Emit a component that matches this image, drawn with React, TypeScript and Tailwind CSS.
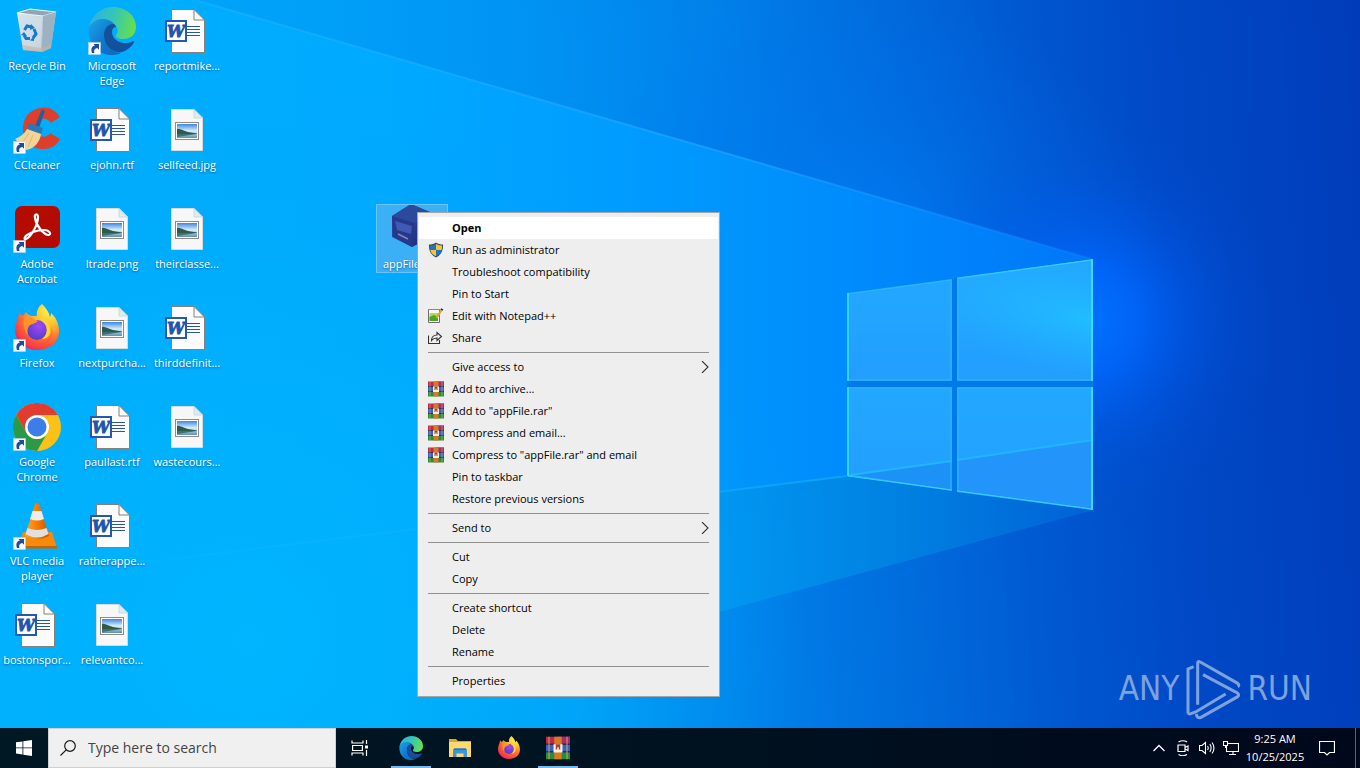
import type { ReactNode } from 'react';

const UI_FONT = 'font-["Open_Sans","Noto_Sans",sans-serif]';

/* ---------- shared gradients ---------- */

function Gradients() {
  return (
    <svg className="absolute h-0 w-0" aria-hidden="true">
      <defs>
        <linearGradient id="edge-blue" x1="0" y1="0.2" x2="0.9" y2="1">
          <stop offset="0" stopColor="#1b9de2" />
          <stop offset="0.5" stopColor="#0f78cf" />
          <stop offset="1" stopColor="#1166bd" />
        </linearGradient>
        <linearGradient id="edge-green" x1="0" y1="0.3" x2="1" y2="0.5">
          <stop offset="0" stopColor="#2bb3e4" />
          <stop offset="0.5" stopColor="#35c5b8" />
          <stop offset="1" stopColor="#66e04c" />
        </linearGradient>
        <radialGradient id="fox-body" cx="0.75" cy="0.15" r="0.95">
          <stop offset="0" stopColor="#fff04a" />
          <stop offset="0.35" stopColor="#ffbd2e" />
          <stop offset="0.65" stopColor="#ff6d30" />
          <stop offset="1" stopColor="#ee2459" />
        </radialGradient>
        <radialGradient id="fox-globe" cx="0.6" cy="0.3" r="0.8">
          <stop offset="0" stopColor="#a447f0" />
          <stop offset="1" stopColor="#4a3cc8" />
        </radialGradient>
        <linearGradient id="bin" x1="0" y1="0" x2="1" y2="1">
          <stop offset="0" stopColor="#dfeaf2" />
          <stop offset="0.6" stopColor="#b9ccd9" />
          <stop offset="1" stopColor="#8fa5b6" />
        </linearGradient>
        <linearGradient id="cone" x1="0" y1="0" x2="1" y2="0">
          <stop offset="0" stopColor="#ffa733" />
          <stop offset="0.5" stopColor="#f57c00" />
          <stop offset="1" stopColor="#cf5500" />
        </linearGradient>
        <linearGradient id="sky" x1="0" y1="0" x2="0" y2="1">
          <stop offset="0" stopColor="#3f86dd" />
          <stop offset="0.5" stopColor="#d8efff" />
          <stop offset="1" stopColor="#5d92a8" />
        </linearGradient>
        <linearGradient id="cube" x1="0" y1="0" x2="1" y2="1">
          <stop offset="0" stopColor="#3558b4" />
          <stop offset="1" stopColor="#1b2672" />
        </linearGradient>
      </defs>
    </svg>
  );
}

/* ---------- wallpaper ---------- */

function Wallpaper() {
  return (
    <svg
      className="absolute inset-0 h-full w-full"
      viewBox="0 0 1360 768"
      preserveAspectRatio="xMidYMid slice"
      aria-hidden="true"
    >
      <defs>
        <linearGradient id="w-base" gradientUnits="userSpaceOnUse" x1="0" y1="80" x2="1360" y2="0">
          <stop offset="0" stopColor="#00aafa" />
          <stop offset="0.25" stopColor="#009ff8" />
          <stop offset="0.4" stopColor="#0092f3" />
          <stop offset="0.53" stopColor="#0080ea" />
          <stop offset="0.65" stopColor="#006bdc" />
          <stop offset="0.75" stopColor="#0058d0" />
          <stop offset="0.85" stopColor="#0049c6" />
          <stop offset="1" stopColor="#003cba" />
        </linearGradient>
        <radialGradient id="w-glow" gradientUnits="userSpaceOnUse" cx="1085" cy="320" r="200">
          <stop offset="0" stopColor="#0072ff" />
          <stop offset="0.25" stopColor="#0068ff" stopOpacity="0.85" />
          <stop offset="0.55" stopColor="#005cf0" stopOpacity="0.4" />
          <stop offset="0.8" stopColor="#0054e0" stopOpacity="0.12" />
          <stop offset="1" stopColor="#0050e0" stopOpacity="0" />
        </radialGradient>
        <radialGradient id="w-halo" gradientUnits="userSpaceOnUse" cx="860" cy="280" r="300">
          <stop offset="0" stopColor="#0084ff" stopOpacity="0.8" />
          <stop offset="0.5" stopColor="#0078f4" stopOpacity="0.35" />
          <stop offset="1" stopColor="#0070f0" stopOpacity="0" />
        </radialGradient>
        <linearGradient id="w-beam" gradientUnits="userSpaceOnUse" x1="0" y1="0" x2="1100" y2="0">
          <stop offset="0" stopColor="#00affe" />
          <stop offset="0.35" stopColor="#00aaff" />
          <stop offset="0.55" stopColor="#009dff" />
          <stop offset="0.7" stopColor="#0092fc" />
          <stop offset="0.8" stopColor="#0089fc" />
          <stop offset="1" stopColor="#0076f8" />
        </linearGradient>
        <linearGradient id="w-beam-low" gradientUnits="userSpaceOnUse" x1="300" y1="0" x2="1092" y2="0">
          <stop offset="0" stopColor="#00b0fc" stopOpacity="0" />
          <stop offset="0.5" stopColor="#0098ee" stopOpacity="0.75" />
          <stop offset="0.75" stopColor="#0082e2" />
          <stop offset="1" stopColor="#0062d6" />
        </linearGradient>
        <radialGradient id="w-left" gradientUnits="userSpaceOnUse" cx="250" cy="640" r="560">
          <stop offset="0" stopColor="#00b8ff" />
          <stop offset="0.6" stopColor="#00b0fc" stopOpacity="0.6" />
          <stop offset="1" stopColor="#00a0f0" stopOpacity="0" />
        </radialGradient>
        <linearGradient id="w-pane" x1="0" y1="0" x2="0" y2="1">
          <stop offset="0" stopColor="#22a8ff" />
          <stop offset="1" stopColor="#229eff" />
        </linearGradient>
        <radialGradient
          id="w-shine"
          gradientUnits="userSpaceOnUse"
          cx="0"
          cy="0"
          r="1"
          gradientTransform="translate(1092 320) rotate(10) scale(190 60)"
        >
          <stop offset="0" stopColor="#20c2ff" stopOpacity="0.85" />
          <stop offset="1" stopColor="#22b4ff" stopOpacity="0" />
        </radialGradient>
        <linearGradient id="w-ray" gradientUnits="userSpaceOnUse" x1="200" y1="0" x2="1092" y2="0">
          <stop offset="0" stopColor="#30b8ff" stopOpacity="0.35" />
          <stop offset="0.6" stopColor="#20a4ff" stopOpacity="0.7" />
          <stop offset="1" stopColor="#2090ff" stopOpacity="0.2" />
        </linearGradient>
        <linearGradient id="w-ray-low" gradientUnits="userSpaceOnUse" x1="100" y1="0" x2="847" y2="0">
          <stop offset="0" stopColor="#20bcff" stopOpacity="0" />
          <stop offset="1" stopColor="#10a8ff" stopOpacity="0.8" />
        </linearGradient>
      </defs>
      <rect width="1360" height="768" fill="url(#w-base)" />
      <rect width="1360" height="768" fill="url(#w-left)" />
      <rect width="1360" height="600" fill="url(#w-halo)" />
      <rect x="840" y="80" width="520" height="460" fill="url(#w-glow)" />

      <path d="M0 0 H195 L1092 259 V510 L560 655 L150 768 H0Z" fill="url(#w-beam)" />
      <path d="M0 580 L847 476 L1092 510 L560 655 L150 768 H0Z" fill="url(#w-beam-low)" />
      <path d="M0 0 H195 L1092 259 V510 L560 655 L150 768 H0Z" fill="url(#w-left)" fillOpacity="0.8" />
      <path d="M195 0 L1092 259" stroke="url(#w-ray)" strokeWidth="2" />
      <path d="M100 568 L847 476" stroke="url(#w-ray-low)" strokeWidth="2" />

      <path d="M952 279 L957 278 V381 H1093 V387 H957 V492 L952 491 V387 H847 V381 H952Z" fill="#007ae8" />
      <path d="M847 293 L952 279 V381 H847Z" fill="url(#w-pane)" />
      <path d="M957 278 L1093 259 V381 H957Z" fill="url(#w-pane)" />
      <path d="M957 278 L1093 259 V381 H957Z" fill="url(#w-shine)" />
      <path d="M847 387 H952 V491 L847 476Z" fill="url(#w-pane)" />
      <path d="M957 387 H1093 V510 L957 492Z" fill="url(#w-pane)" />
      <path d="M847 476 L952 461 V491Z" fill="#1c92f6" />
      <path d="M957 460 L1093 440 V510 L957 492Z" fill="#2294fa" />
      <path d="M850 475 L952 461 M957 460 L1093 440" stroke="#22b4ff" strokeWidth="2" />
      <path
        d="M848 294 L951 280 V380 H848Z M958 279 L1092 260 V380 H958Z M848 388 H951 V490 L848 475Z M958 388 H1092 V509 L958 491Z"
        fill="none"
        stroke="#34b4ff"
      />
      <g fill="none" stroke="#36dcff">
        <path d="M848 381 V293 M848 387 V476" strokeWidth="2" strokeOpacity="0.8" />
        <path d="M1092 259 V381 M1092 387 V510" strokeWidth="2" />
        <path d="M848 476 L952 490 M957 278 L1092 260 M1092 509 L957 491" strokeOpacity="0.8" />
      </g>
    </svg>
  );
}

/* ---------- desktop icons (48 x 48) ---------- */

function Svg48({ children }: { children: ReactNode }) {
  return (
    <svg className="h-12 w-12 shrink-0" viewBox="0 0 48 48" fill="none" aria-hidden="true">
      {children}
    </svg>
  );
}

function ShortcutArrow() {
  return (
    <g>
      <rect x="0.5" y="35.5" width="12" height="12" fill="#f7fbff" stroke="#b9d4e8" strokeWidth="0.6" />
      <path d="M4 46 C2.500 42 4 39 7 38.600 L5.500 37 H11 V42.800 L9.300 41 C7 41.500 5.500 43 6.500 46Z" fill="#1f4e96" />
    </g>
  );
}

function EdgeShapes() {
  return (
    <g>
      <path d="M1 20 C4 7 14 0 25 0 C38 0 48 9 48 20 C48 28 42 32 35 32 C30 32 27 30 28 28 C31 25 30 20 26 17 C19 11 7 12 1 20Z" fill="url(#edge-green)" />
      <path d="M1 20 C7 10 20 10 26 17 C20 16 15 22 16 30 C17 40 25 46 33 46 C29 48 25 48 22 48 C9 47 -1 36 1 20Z" fill="url(#edge-blue)" />
      <path d="M26 17 C20 16 15 22 16 30 C17 41 27 47 34 45 C40 43 44 39 46 35.500 C46.500 34.500 45.500 34 44.500 34.500 C36 39 24 34 24 25 C24 22 25.500 20 28 20 C28 19 27 18 26 17Z" fill="#14509b" />
    </g>
  );
}

function FoxShapes() {
  return (
    <g>
      <path d="M29 0 C33 4 36 8 37 13 C38 11 38 10 38 9 C43 13 46 20 46 27 C46 39 36 46 24 46 C11 46 2 37 2 26 C2 21 4 17 5 14 L6 9 L10 12 L13 8 C14 10 16 11 18 12 C21 12 23 12 24 12 C23 8 25 3 29 0Z" fill="url(#fox-body)" />
      <path d="M5 20 C8 34 18 42 30 38 C38 35 40 28 38 21 C42 30 38 43 24 43 C12 43 4 33 5 20Z" fill="#ff4a3d" fillOpacity="0.4" />
      <circle cx="24" cy="26" r="10" fill="url(#fox-globe)" />
      <path d="M11 14 C16 12 21 15 25 17 C22 20 18 20 16 22 C14 25 14 28 15 31 C11 28 10 20 11 14Z" fill="#ff9428" />
      <path d="M27 4 C25 12 36 15 37 25 C38 31 34 35 29 35 C33 32 35 27 33 22 C31 17 24 13 27 4Z" fill="#ffd43a" />
    </g>
  );
}

function RecycleBinIcon() {
  return (
    <Svg48>
      <path d="M4 6 L17 2 L43 5 L38 41 L29 45 L10 43Z" fill="url(#bin)" />
      <path d="M4 6 L17 2 L43 5 L30 9Z" fill="#8ea6b6" stroke="#edf5fa" strokeWidth="1.2" />
      <path d="M30 9 L43 5 L38 41 L29 45Z" fill="#9db1c1" />
      <path d="M6 8 L29 11 L28 44 L10 42Z" fill="#d3e0e9" fillOpacity="0.7" />
      <path d="M9 38 L28 41 L38 37 V41 L29 45 L10 43Z" fill="#c5b49f" fillOpacity="0.6" />
      <g stroke="#1878cc" strokeWidth="3">
        <path d="M11.500 23 L14 19 L18.500 20" />
        <path d="M21 22 L23 27 L20 31" />
        <path d="M17 31.500 H13 L11 28" />
      </g>
      <path d="M18 17 L22 21 L17 23Z M21 29 L17 33.500 L21 34Z M8 28 L11 25 L14 29Z" fill="#1878cc" />
    </Svg48>
  );
}

function EdgeIcon() {
  return (
    <Svg48>
      <EdgeShapes />
      <ShortcutArrow />
    </Svg48>
  );
}

function CCleanerIcon() {
  return (
    <Svg48>
      <path d="M47 11 C42 3 34 0 27 2 C15 4 9 14 10 25 C11 37 21 44 31 43 C38 43 44 39 47 33 L37 27 C34 32 27 32 24 27 C21 21 24 14 29 13 C33 12 36 14 38 17Z" fill="#dd3f2c" />
      <path d="M29 3 L32 5 L26 22 L22 20Z" fill="#225f9e" />
      <path d="M16 17 L30 22 L28 28 L14 24Z" fill="#2a78b8" />
      <path d="M14 23 L28 28 C27 36 21 43 13 44 L2 33 C7 31 11 28 14 23Z" fill="#f3d497" />
      <path d="M16 27 L9 37 M20 29 L15 41" stroke="#dcb878" strokeWidth="1" />
      <ShortcutArrow />
    </Svg48>
  );
}

function AcrobatIcon() {
  return (
    <Svg48>
      <rect x="2" y="1" width="45" height="42" rx="7" fill="#b30b00" />
      <path d="M13 34 C18 32 25 20 25 12 C25 8 21 9 22 13 C23 20 30 29 35 30 C39 30 37 25 31 25 C24 25 15 28 12 32 C11 34 12 35 13 34Z" stroke="#fff" strokeWidth="2.200" />
      <ShortcutArrow />
    </Svg48>
  );
}

function FirefoxIcon() {
  return (
    <Svg48>
      <FoxShapes />
      <ShortcutArrow />
    </Svg48>
  );
}

function ChromeIcon() {
  return (
    <Svg48>
      <circle cx="24" cy="24" r="24" fill="#fbc116" />
      <path d="M24 12 H44.800 A24 24 0 0 0 3.200 12 L13.600 30Z" fill="#e33b2e" />
      <path d="M3.200 12 A24 24 0 0 0 24 48 L34.400 30 A12 12 0 0 1 13.600 30Z" fill="#2a9a48" />
      <circle cx="24" cy="24" r="12" fill="#fff" />
      <circle cx="24" cy="24" r="9.500" fill="#3b7de9" />
      <ShortcutArrow />
    </Svg48>
  );
}

function VlcIcon() {
  return (
    <Svg48>
      <path d="M10 30 H39 L44 46 H5Z" fill="#f78a0c" />
      <path d="M5 44 H44 V46.500 H5Z" fill="#c86400" />
      <path d="M22 2 Q24 0 26 2 L36 34 Q24 41 12 34Z" fill="url(#cone)" />
      <path d="M19.500 9 H28.500 L31 17 Q24 20 17 17Z" fill="#ececec" />
      <path d="M14.500 26 Q24 30 33.500 26 L35.500 32 Q24 39 12.500 32Z" fill="#e0e0e0" />
      <ShortcutArrow />
    </Svg48>
  );
}

function WordIcon() {
  return (
    <Svg48>
      <path d="M8.500 2.500 H31 L41.500 13 V45.500 H8.500Z" fill="#fcfcfc" stroke="#8a7f78" />
      <path d="M31 2.500 V13 H41.500" stroke="#8a7f78" />
      <path d="M24 19.500 H37 M24 22.500 H37 M24 25.500 H37 M24 28.500 H37" stroke="#2b579a" />
      <rect x="3" y="14" width="20" height="20" fill="#fff" stroke="#2359b0" strokeWidth="2" />
      <text
        x="13"
        y="30"
        textAnchor="middle"
        stroke="#1f55ab"
        strokeWidth="0.8"
        className="fill-[#1f55ab] font-['DejaVu_Serif',serif] text-[16px] font-bold italic"
      >
        W
      </text>
    </Svg48>
  );
}

function PictureIcon() {
  return (
    <Svg48>
      <path d="M8.500 3.500 H31 L39.500 12 V44.500 H8.500Z" fill="#f7f7f7" stroke="#d9d9d9" />
      <path d="M31 3.500 V12 H39.500Z" fill="#dcecf4" stroke="#c9d3d8" strokeWidth="0.800" />
      <rect x="12.500" y="16.500" width="23" height="17" fill="#fff" stroke="#8b8b8b" />
      <rect x="14" y="18" width="20" height="14" fill="url(#sky)" />
      <path d="M14 23 C17 22 20 25 25 26 L34 27.500 V28 H14Z" fill="#2f5a4a" />
      <path d="M14 28 H34 L14 31Z" fill="#3d6f74" />
    </Svg48>
  );
}

function CubeIcon() {
  return (
    <Svg48>
      <path d="M23 -1 L44 8 V32 L24 42 L4 32 V11Z" fill="url(#cube)" />
      <path d="M23 -1 L44 8 L26 18 L4 11Z" fill="#2c4a9c" />
      <path d="M4 11 L26 18 L24 42 L5 31Z" fill="#25388c" />
      <path d="M7 16 L24 21 L23 29 L9 25Z" fill="#4a68c4" fillOpacity="0.7" />
      <path d="M10 29 L20 34" stroke="#8d86b8" strokeWidth="1.500" />
    </Svg48>
  );
}

/* ---------- menu icons (16 x 16) ---------- */

function ShieldIcon() {
  return (
    <svg className="h-4 w-4" viewBox="0 0 16 16" aria-hidden="true">
      <path d="M8 0.500 C10 2 12.500 2.500 15 2.500 C15.500 9 13 13 8 15.500 C3 13 0.500 9 1 2.500 C3.500 2.500 6 2 8 0.500Z" fill="#3b4b5c" />
      <path d="M8 2 V8 H2.300 C2 6.500 2 5 2 3.500 C4 3.500 6 3 8 2Z" fill="#1e74c8" />
      <path d="M8 2 C10 3 12 3.500 14 3.500 C14 5 14 6.500 13.700 8 H8Z" fill="#fdc32b" />
      <path d="M2.300 8 H8 V14.300 C5 13 3 11 2.300 8Z" fill="#fdc32b" />
      <path d="M8 8 H13.700 C13 11 11 13 8 14.300Z" fill="#1e74c8" />
    </svg>
  );
}

function NotepadIcon() {
  return (
    <svg className="h-4 w-4" viewBox="0 0 16 16" fill="none" aria-hidden="true">
      <path d="M0.500 1.500 H11.500 V14.500 H0.500Z" fill="#fafafa" stroke="#6f6f6f" />
      <path d="M1.500 1.500 H11" stroke="#c9a070" strokeDasharray="1 1" />
      <path d="M1.500 5 H10 V13 H1.500Z" fill="#a8dc5c" />
      <path d="M1.500 9 L6 7 L10 9 V13 H1.500Z" fill="#4da324" />
      <path d="M13.500 2 L8.500 10" stroke="#e0a03c" strokeWidth="2.200" />
      <path d="M12.800 0.800 L15 2.200" stroke="#2b2b2b" strokeWidth="1.500" />
    </svg>
  );
}

function ShareIcon() {
  return (
    <svg className="h-4 w-4" viewBox="0 0 16 16" fill="none" stroke="#333" strokeWidth="1.100" aria-hidden="true">
      <path d="M0.500 5.500 V13.500 H11.500 V10" />
      <path d="M3.500 10.500 C3.500 7 6 5 9 5 V2.500 L13.500 6.500 L9 10.500 V8 C6.500 8 5 8.500 3.500 10.500Z" />
    </svg>
  );
}

function RarShapes() {
  return (
    <g>
      <path d="M0 0.500 H16 V5.500 H0Z" fill="#c02a48" />
      <path d="M8 0.500 H16 V5.500 H8Z" fill="#a82a70" />
      <path d="M0 5.500 H16 V10.500 H0Z" fill="#3f5fc0" />
      <path d="M0 10.500 H16 V15.500 H0Z" fill="#2a8a40" />
      <path d="M0 5 H16 V6 H0Z M0 10 H16 V11 H0Z" fill="#2c2a60" />
      <path d="M1.500 0.500 H2.500 V15.500 H1.500Z M13.500 0.500 H14.500 V15.500 H13.500Z" fill="#e8c860" fillOpacity="0.5" />
      <path d="M5.500 0.500 H10.500 V15.500 H5.500Z" fill="#d87a20" />
      <path d="M5 5.500 H11 V11 H5Z" fill="#f6efe0" />
      <path d="M6.500 5.500 V9 H7.500 V7.500 H8.500 V9 H9.500 V5.500Z" fill="#a5442c" />
    </g>
  );
}

function RarIcon() {
  return (
    <svg className="h-4 w-4" viewBox="0 0 16 16" aria-hidden="true">
      <RarShapes />
    </svg>
  );
}

/* ---------- taskbar icons ---------- */

function FolderIcon() {
  return (
    <svg className="h-6 w-6" viewBox="0 0 24 24" aria-hidden="true">
      <path d="M1 3 H8 L10 5 H23 V20 H1Z" fill="#e5a51d" />
      <path d="M1 6 H23 V21 H1Z" fill="#ffd970" />
      <path d="M5 21 V14 Q5 12.500 6.500 12.500 H17.500 Q19 12.500 19 14 V21 H15.500 V17.500 H8.500 V21Z" fill="#3a96dd" />
      <path d="M6 12.500 H18 V14 H6Z" fill="#1c77bd" />
    </svg>
  );
}

function TaskViewIcon() {
  return (
    <svg className="h-[18px] w-[18px]" viewBox="0 0 18 18" fill="none" stroke="#fff" strokeWidth="1.200" aria-hidden="true">
      <path d="M1 1.500 V4 H12 V1.500 M1 16.500 V14 H12 V16.500 M1.600 6.500 H11.400 V11.500 H1.600Z" />
      <path d="M15.500 1 V5 M15.500 11 V17" />
      <path d="M14 6.500 H17 V9.500 H14Z" fill="#fff" stroke="none" />
    </svg>
  );
}

const desktopIcons: { label: string; icon: ReactNode }[][] = [
  [
    { label: 'Recycle Bin', icon: <RecycleBinIcon /> },
    { label: 'CCleaner', icon: <CCleanerIcon /> },
    { label: 'Adobe Acrobat', icon: <AcrobatIcon /> },
    { label: 'Firefox', icon: <FirefoxIcon /> },
    { label: 'Google Chrome', icon: <ChromeIcon /> },
    { label: 'VLC media player', icon: <VlcIcon /> },
    { label: 'bostonspor...', icon: <WordIcon /> },
  ],
  [
    { label: 'Microsoft Edge', icon: <EdgeIcon /> },
    { label: 'ejohn.rtf', icon: <WordIcon /> },
    { label: 'ltrade.png', icon: <PictureIcon /> },
    { label: 'nextpurcha...', icon: <PictureIcon /> },
    { label: 'paullast.rtf', icon: <WordIcon /> },
    { label: 'ratherappe...', icon: <WordIcon /> },
    { label: 'relevantco...', icon: <PictureIcon /> },
  ],
  [
    { label: 'reportmike...', icon: <WordIcon /> },
    { label: 'sellfeed.jpg', icon: <PictureIcon /> },
    { label: 'theirclasse...', icon: <PictureIcon /> },
    { label: 'thirddefinit...', icon: <WordIcon /> },
    { label: 'wastecours...', icon: <PictureIcon /> },
  ],
];

type MenuItem = { label: string; icon?: ReactNode; bold?: boolean; submenu?: boolean };

const menuGroups: MenuItem[][] = [
  [
    { label: 'Open', bold: true },
    { label: 'Run as administrator', icon: <ShieldIcon /> },
    { label: 'Troubleshoot compatibility' },
    { label: 'Pin to Start' },
    { label: 'Edit with Notepad++', icon: <NotepadIcon /> },
    { label: 'Share', icon: <ShareIcon /> },
  ],
  [
    { label: 'Give access to', submenu: true },
    { label: 'Add to archive...', icon: <RarIcon /> },
    { label: 'Add to "appFile.rar"', icon: <RarIcon /> },
    { label: 'Compress and email...', icon: <RarIcon /> },
    { label: 'Compress to "appFile.rar" and email', icon: <RarIcon /> },
    { label: 'Pin to taskbar' },
    { label: 'Restore previous versions' },
  ],
  [{ label: 'Send to', submenu: true }],
  [{ label: 'Cut' }, { label: 'Copy' }],
  [{ label: 'Create shortcut' }, { label: 'Delete' }, { label: 'Rename' }],
  [{ label: 'Properties' }],
];

function DesktopIcon({ label, icon, selected }: { label: string; icon: ReactNode; selected?: boolean }) {
  return (
    <button
      type="button"
      className={`flex w-[72px] flex-col items-center gap-[3px] self-start border pb-px ${
        selected ? 'border-[#6cc4fb] bg-[#3cb0f6]' : 'border-transparent'
      }`}
    >
      {icon}
      <span className="text-center text-[11px] leading-[15px] text-white [text-shadow:0_1px_2px_rgba(0,40,90,0.6)]">
        {label}
      </span>
    </button>
  );
}

function ContextMenu() {
  return (
    <div role="menu" className="absolute top-[212px] left-[417px] w-[303px] border border-[#a5a5a5] bg-[#eeeeee] px-px py-1">
      {menuGroups.map((group, i) => (
        <div key={group[0].label}>
          {i > 0 && <hr className="mx-[9px] my-[3px] border-t border-[#919191]" />}
          {group.map((item) => (
            <button
              key={item.label}
              type="button"
              role="menuitem"
              className={`flex h-[22px] w-full items-center px-[9px] text-left text-[11px] text-black ${
                item.bold ? 'bg-white font-bold' : ''
              }`}
            >
              <span className="w-6 shrink-0">{item.icon}</span>
              <span className="flex-1">{item.label}</span>
              {item.submenu && (
                <svg className="h-3 w-2" viewBox="0 0 8 12" fill="none" stroke="#333" strokeWidth="1.100" aria-hidden="true">
                  <path d="M1 0 L7 6 L1 12" />
                </svg>
              )}
            </button>
          ))}
        </div>
      ))}
    </div>
  );
}

function Watermark() {
  return (
    <div className="absolute right-12 bottom-2 flex items-center gap-1.5 font-['DejaVu_Sans_Condensed','DejaVu_Sans',sans-serif] text-[33px] leading-[60px] text-[#7da2dc]">
      <span>ANY</span>
      <svg className="h-[62px] w-14" viewBox="0 0 168 186" fill="none" stroke="#7da2dc" aria-hidden="true">
        <path d="M26 26 L9 33 V162 Q9 170 18 167 L32 162 L122 108" strokeWidth="9" />
        <path d="M38 140 V15 Q38 8 46 12 L158 76 Q166 82 160 88 L54 48" strokeWidth="0" />
        <path d="M38 140 V15 Q38 8 46 12 L158 76 Q165 82 158 86" strokeWidth="9" />
        <path d="M54 50 L148 100" strokeWidth="9" />
        <path d="M34 168 Q36 183 48 178 L158 116 Q165 110 156 104 L146 99" strokeWidth="9" />
      </svg>
      <span>RUN</span>
    </div>
  );
}

function TaskButton({ label, open, children }: { label: string; open?: boolean; children: ReactNode }) {
  return (
    <button
      type="button"
      aria-label={label}
      className={`flex h-10 w-10 items-center justify-center border-b-2 pt-0.5 ${
        open ? 'border-[#76b9ed]' : 'border-transparent'
      }`}
    >
      {children}
    </button>
  );
}

function Taskbar() {
  return (
    <footer className="relative flex h-10 shrink-0 items-center bg-linear-to-r from-[#001823] via-[#001220] to-[#00081c] text-white">
      <button type="button" aria-label="Start" className="flex h-10 w-12 items-center justify-center">
        <svg className="h-4 w-4" viewBox="0 0 16 16" fill="#fff" aria-hidden="true">
          <path d="M0 2.300 L6.500 1.400 V7.500 H0Z M7.300 1.300 L16 0 V7.500 H7.300Z M0 8.300 H6.500 V14.500 L0 13.600Z M7.300 8.300 H16 V16 L7.300 14.700Z" />
        </svg>
      </button>
      <label className="flex h-10 w-72 items-center gap-3 border border-[#d0d0d0] bg-[#f0f0f0] px-[11px]">
        <svg className="h-4 w-4 shrink-0" viewBox="0 0 16 16" fill="none" stroke="#1a1a1a" strokeWidth="1.200" aria-hidden="true">
          <circle cx="10" cy="6" r="5.300" />
          <path d="M6.200 9.800 L0.500 15.500" />
        </svg>
        <input
          type="text"
          aria-label="Search"
          placeholder="Type here to search"
          className="w-full bg-transparent text-[14px] leading-5 outline-none placeholder:text-[#444]"
        />
      </label>
      <button type="button" aria-label="Task View" className="flex h-10 w-12 items-center justify-center">
        <TaskViewIcon />
      </button>
      <div className="ml-[7px] flex gap-[9px]">
        <TaskButton label="Microsoft Edge" open>
          <svg className="h-6 w-6" viewBox="0 0 48 48" aria-hidden="true">
            <EdgeShapes />
          </svg>
        </TaskButton>
        <TaskButton label="File Explorer">
          <FolderIcon />
        </TaskButton>
        <TaskButton label="Firefox">
          <svg className="h-6 w-6" viewBox="0 0 48 48" aria-hidden="true">
            <FoxShapes />
          </svg>
        </TaskButton>
        <TaskButton label="WinRAR" open>
          <svg className="h-6 w-6" viewBox="0 0 16 16" aria-hidden="true">
            <RarShapes />
          </svg>
        </TaskButton>
      </div>
      <div className="ml-auto flex h-10 items-center">
        <button type="button" aria-label="Show hidden icons" className="flex w-6 justify-center">
          <svg className="h-3 w-3" viewBox="0 0 12 12" fill="none" stroke="#fff" strokeWidth="1.300" aria-hidden="true">
            <path d="M0.500 9 L6 3.500 L11.500 9" />
          </svg>
        </button>
        <button type="button" aria-label="Meet Now" className="flex w-6 justify-center">
          <svg className="h-4 w-4" viewBox="0 0 16 16" fill="none" stroke="#fff" strokeWidth="1.200" aria-hidden="true">
            <path d="M3 5 H10 V11.500 H3Z M10 7.500 L13 6 V10.500 L10 9" />
            <path d="M3.500 2 Q8 -0.500 12 2 M3.500 14.500 Q8 17 12 14.500" />
          </svg>
        </button>
        <button type="button" aria-label="Volume" className="flex w-6 justify-center">
          <svg className="h-4 w-4" viewBox="0 0 16 16" fill="none" stroke="#fff" strokeWidth="1.100" aria-hidden="true">
            <path d="M0.500 5.500 H3 L6.500 2.500 V13.500 L3 10.500 H0.500Z" />
            <path d="M8.500 6 Q10 8 8.500 10 M10.800 4 Q13.500 8 10.800 12 M13 2.500 Q17 8 13 13.500" />
          </svg>
        </button>
        <button type="button" aria-label="Network" className="flex w-6 justify-center">
          <svg className="h-4 w-4" viewBox="0 0 16 16" fill="none" stroke="#fff" strokeWidth="1.100" aria-hidden="true">
            <path d="M5 3.500 H15.500 V11.500 H3.500 V6 M10 11.500 V14.500 M6 14.500 H13" />
            <path d="M0.500 1.500 H4.500 V5.500 H0.500Z M2.500 5.500 V8" />
          </svg>
        </button>
        <time className="w-16 text-center text-[11px] leading-[18px]">
          9:25 AM
          <br />
          10/25/2025
        </time>
        <button type="button" aria-label="Notifications" className="flex h-10 w-[49px] items-center justify-center border-r border-[#5a6070] pr-2">
          <svg className="h-4 w-4" viewBox="0 0 16 16" fill="none" stroke="#fff" strokeWidth="1.200" aria-hidden="true">
            <path d="M0.500 1.500 H15.500 V12.500 H10.500 L8 15 L5.500 12.500 H0.500Z" />
          </svg>
        </button>
        <div className="w-1" />
      </div>
    </footer>
  );
}

export default function App() {
  return (
    <div className={`relative flex min-h-screen flex-col overflow-hidden bg-[#0090f8] ${UI_FONT}`}>
      <Gradients />
      <Wallpaper />
      <main className="relative flex-1">
        <div className="grid auto-cols-[75px] grid-flow-col grid-rows-[repeat(7,99px)] pt-1.5 pl-px">
          {desktopIcons.map((column) =>
            column.map((item, i) => (
              <div key={item.label} className={`flex ${i === 0 ? 'row-start-1' : ''}`}>
                <DesktopIcon label={item.label} icon={item.icon} />
              </div>
            ))
          )}
          <div className="col-start-6 row-start-3 flex">
            <DesktopIcon label="appFile.exe" icon={<CubeIcon />} selected />
          </div>
        </div>
        <ContextMenu />
        <Watermark />
      </main>
      <Taskbar />
    </div>
  );
}
